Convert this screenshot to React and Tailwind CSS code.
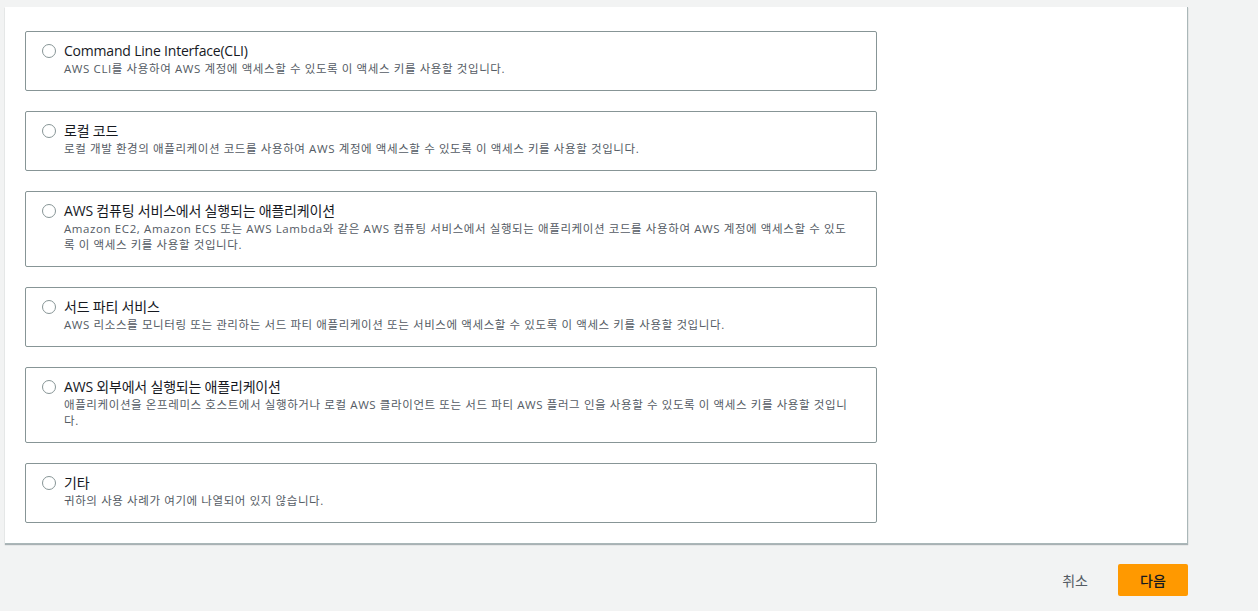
const items = [
  { t: "Command Line Interface(CLI)", d: "AWS CLI를 사용하여 AWS 계정에 액세스할 수 있도록 이 액세스 키를 사용할 것입니다." },
  { t: "로컬 코드", d: "로컬 개발 환경의 애플리케이션 코드를 사용하여 AWS 계정에 액세스할 수 있도록 이 액세스 키를 사용할 것입니다." },
  { t: "AWS 컴퓨팅 서비스에서 실행되는 애플리케이션", d: "Amazon EC2, Amazon ECS 또는 AWS Lambda와 같은 AWS 컴퓨팅 서비스에서 실행되는 애플리케이션 코드를 사용하여 AWS 계정에 액세스할 수 있도록 이 액세스 키를 사용할 것입니다." },
  { t: "서드 파티 서비스", d: "AWS 리소스를 모니터링 또는 관리하는 서드 파티 애플리케이션 또는 서비스에 액세스할 수 있도록 이 액세스 키를 사용할 것입니다." },
  { t: "AWS 외부에서 실행되는 애플리케이션", d: "애플리케이션을 온프레미스 호스트에서 실행하거나 로컬 AWS 클라이언트 또는 서드 파티 AWS 플러그 인을 사용할 수 있도록 이 액세스 키를 사용할 것입니다." },
  { t: "기타", d: "귀하의 사용 사례가 여기에 나열되어 있지 않습니다." },
];

export default function App() {
  return (
    <div
      className="min-h-[611px] bg-[#f2f3f3] pl-[5px] pt-[7px] text-[#16191f]"
      style={{ fontFamily: '"Open Sans", "Noto Sans CJK KR", sans-serif' }}
    >
      <div className="w-[1183px] bg-white border-r border-b border-[#aab7b8] pl-5 pt-6 pb-5 flex flex-col gap-5 shadow-[0_1px_1px_rgba(0,28,36,0.3)]">
        {items.map((it) => (
          <div key={it.t} className="w-[852px] border border-[#879596] rounded-[2px] pl-4 pr-4 pt-[9px] pb-[13px] flex gap-2">
            <div className="mt-[3px] w-[14px] h-[14px] shrink-0 rounded-full border border-[#879596] bg-white" />
            <div>
              <div className="text-[14px] leading-[20px] tracking-[-0.2px]">{it.t}</div>
              <div className="text-[11.5px] leading-[16px] tracking-[0.6px] text-[#545b64] pr-1">{it.d}</div>
            </div>
          </div>
        ))}
      </div>
      <div className="w-[1183px] flex justify-end items-center gap-[30px] mt-5">
        <span className="text-[14px] text-[#545b64]">취소</span>
        <button className="w-[70px] h-[32px] bg-[#ff9900] rounded-[2px] text-[14px] font-medium text-[#16191f]">다음</button>
      </div>
    </div>
  );
}
